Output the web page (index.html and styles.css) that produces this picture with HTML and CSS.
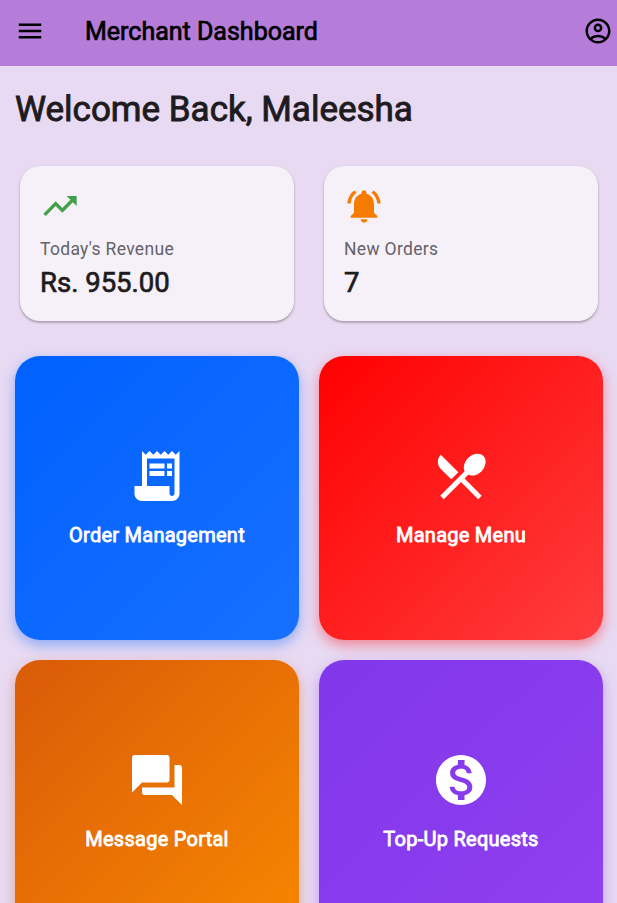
FILE: index.html
```html
<!DOCTYPE html>
<html lang="en">
<head>
<meta charset="utf-8">
<title>Merchant Dashboard</title>
<link rel="stylesheet" href="styles.css">
</head>
<body>
<header class="app-bar">
  <svg class="bar-icon" viewBox="0 0 24 24"><path d="M3 18h18v-2H3v2zm0-5h18v-2H3v2zm0-7v2h18V6H3z"/></svg>
  <h1 class="bar-title">Merchant Dashboard</h1>
  <svg class="bar-icon" viewBox="0 0 24 24"><path d="M12 2C6.480 2 2 6.480 2 12s4.480 10 10 10 10-4.480 10-10S17.520 2 12 2zM7.350 18.500C8.660 17.560 10.260 17 12 17s3.340.56 4.650 1.500C15.340 19.440 13.740 20 12 20s-3.340-.56-4.650-1.500zm10.790-1.380C16.450 15.800 14.320 15 12 15s-4.450.8-6.140 2.120C4.700 15.730 4 13.950 4 12c0-4.420 3.580-8 8-8s8 3.580 8 8c0 1.950-.7 3.730-1.860 5.120z"/><path d="M12 6c-1.930 0-3.500 1.570-3.500 3.500S10.070 13 12 13s3.500-1.570 3.500-3.500S13.930 6 12 6zm0 5c-.83 0-1.500-.67-1.500-1.500S11.170 8 12 8s1.500.67 1.500 1.500S12.830 11 12 11z"/></svg>
</header>
<main class="content">
  <h2 class="welcome">Welcome Back, Maleesha</h2>
  <section class="stats">
    <article class="stat">
      <svg class="stat-icon green" viewBox="0 0 24 24"><path d="M16 6l2.290 2.290-4.880 4.880-4-4L2 16.590 3.410 18l6-6 4 4 6.300-6.290L22 12V6z"/></svg>
      <span class="stat-label">Today's Revenue</span>
      <span class="stat-value">Rs. 955.00</span>
    </article>
    <article class="stat">
      <svg class="stat-icon orange" viewBox="0 0 24 24"><path d="M7.580 4.080L6.150 2.650C3.750 4.480 2.170 7.300 2.030 10.500h2c.15-2.650 1.510-4.970 3.550-6.420zm12.390 6.420h2c-.15-3.200-1.730-6.020-4.120-7.850l-1.420 1.430c2.020 1.450 3.390 3.770 3.540 6.420zM18 11c0-3.070-1.640-5.640-4.500-6.320V4c0-.83-.67-1.500-1.500-1.500s-1.500.67-1.500 1.500v.68C7.630 5.360 6 7.920 6 11v5l-2 2v1h16v-1l-2-2v-5zm-6 11c.14 0 .27-.01.4-.04.65-.14 1.180-.58 1.440-1.180.1-.24.15-.5.15-.78h-4c.01 1.100.9 2 2.010 2z"/></svg>
      <span class="stat-label">New Orders</span>
      <span class="stat-value">7</span>
    </article>
  </section>
  <nav class="tiles">
    <a class="tile blue">
      <svg class="tile-icon" viewBox="0 0 24 24"><path d="M19.500 3.500L18 2l-1.500 1.500L15 2l-1.500 1.500L12 2l-1.500 1.500L9 2 7.500 3.500 6 2v14H3v3c0 1.660 1.340 3 3 3h12c1.660 0 3-1.340 3-3V2l-1.500 1.500zM19 19c0 .55-.45 1-1 1s-1-.45-1-1v-3H8V5h11v14z"/><path d="M9 7h6v2H9zM16 7h2v2h-2zM9 10h6v2H9zM16 10h2v2h-2z"/></svg>
      <span class="tile-label">Order Management</span>
    </a>
    <a class="tile red">
      <svg class="tile-icon" viewBox="0 0 24 24"><path d="M8.100 13.340l2.830-2.830L3.910 3.500c-1.560 1.560-1.560 4.090 0 5.660l4.190 4.180zm6.780-1.810c1.530.71 3.680.21 5.270-1.380 1.910-1.910 2.280-4.650.81-6.120-1.460-1.460-4.200-1.100-6.120.81-1.590 1.590-2.090 3.740-1.380 5.270L3.700 19.870l1.410 1.410L12 14.410l6.880 6.880 1.410-1.410L13.410 13l1.470-1.470z"/></svg>
      <span class="tile-label">Manage Menu</span>
    </a>
    <a class="tile amber">
      <svg class="tile-icon" viewBox="0 0 24 24"><path d="M21 6h-2v9H6v2c0 .55.45 1 1 1h11l4 4V7c0-.55-.45-1-1-1zm-4 6V3c0-.55-.45-1-1-1H3c-.55 0-1 .45-1 1v14l4-4h10c.55 0 1-.45 1-1z"/></svg>
      <span class="tile-label">Message Portal</span>
    </a>
    <a class="tile purple">
      <svg class="tile-icon" viewBox="0 0 24 24"><path d="M12 2C6.480 2 2 6.480 2 12s4.480 10 10 10 10-4.480 10-10S17.520 2 12 2zm1.410 16.090V20h-2.670v-1.930c-1.710-.36-3.160-1.460-3.270-3.400h1.960c.1 1.050.82 1.870 2.650 1.870 1.960 0 2.400-.98 2.400-1.590 0-.83-.44-1.610-2.670-2.140-2.480-.6-4.180-1.620-4.180-3.670 0-1.720 1.390-2.840 3.110-3.210V4h2.670v1.950c1.860.45 2.790 1.860 2.850 3.390H14.300c-.05-1.110-.64-1.870-2.220-1.870-1.500 0-2.400.68-2.400 1.640 0 .84.65 1.390 2.670 1.910s4.180 1.390 4.180 3.910c-.01 1.830-1.380 2.830-3.120 3.160z"/></svg>
      <span class="tile-label">Top-Up Requests</span>
    </a>
  </nav>
</main>
</body>
</html>
```

FILE: styles.css
```css
* { box-sizing: border-box; }

html { overflow: hidden; }

body {
  margin: 0;
  height: 903px;
  overflow: hidden;
  background: #e8daf3;
  color: #1d1b20;
  font-family: Roboto, sans-serif;
}

svg { display: block; fill: currentColor; flex: none; }

h1, h2 { margin: 0; font-weight: 400; }

.app-bar {
  display: flex;
  align-items: center;
  height: 66px;
  padding: 0 4px 4px 15px;
  background: #b57cda;
  color: #000;
}

.bar-icon { width: 30px; height: 30px; }

.bar-title {
  flex: 1;
  margin-left: 40px;
  padding-top: 2px;
  font-size: 25px;
  line-height: 32px;
  -webkit-text-stroke: 0.7px currentColor;
}

.content { padding: 21px 14px 0 15px; }

.welcome {
  font-size: 35px;
  line-height: 45px;
  -webkit-text-stroke: 0.9px currentColor;
}

.stats {
  display: grid;
  grid-template-columns: 274px 274px;
  gap: 30px;
  padding: 34px 5px 35px;
}

.stat {
  display: flex;
  flex-direction: column;
  height: 155px;
  padding: 20px;
  border-radius: 20px;
  background: #f6f1f9;
  box-shadow: 0 1px 3px rgba(0, 0, 0, 0.2), 0 2px 2px rgba(0, 0, 0, 0.14);
}

.stat-icon { width: 40px; height: 40px; }
.green { color: #43a047; }
.orange { color: #f57c00; }

.stat-label {
  margin-top: 11px;
  font-size: 17.5px;
  line-height: 25px;
  letter-spacing: 0.32px;
  color: #656268;
}

.stat-value {
  margin-top: 3px;
  font-size: 27.5px;
  line-height: 36px;
  -webkit-text-stroke: 0.7px currentColor;
}

.tiles {
  display: grid;
  grid-template-columns: 284px 284px;
  grid-auto-rows: 284px;
  gap: 20px;
}

.tile {
  display: flex;
  flex-direction: column;
  align-items: center;
  padding-top: 90px;
  border-radius: 25px;
  color: #fff;
}

.tile-icon { width: 60px; height: 60px; }

.tile-label {
  margin-top: 15px;
  font-size: 20px;
  line-height: 28px;
  letter-spacing: 0.26px;
  -webkit-text-stroke: 0.8px currentColor;
}

.blue {
  background: linear-gradient(135deg, #0061ff, #1770ff);
  box-shadow: 0 5px 12.5px rgba(0, 97, 255, 0.4);
}

.red {
  background: linear-gradient(135deg, #ff0000, #ff3d3d);
  box-shadow: 0 5px 12.5px rgba(255, 0, 0, 0.4);
}

.amber {
  background: linear-gradient(135deg, #d95b08, #f88700);
  box-shadow: 0 5px 12.5px rgba(217, 91, 8, 0.4);
}

.purple {
  background: linear-gradient(135deg, #8137ea, #9040f0);
  box-shadow: 0 5px 12.5px rgba(129, 55, 234, 0.4);
}
```
